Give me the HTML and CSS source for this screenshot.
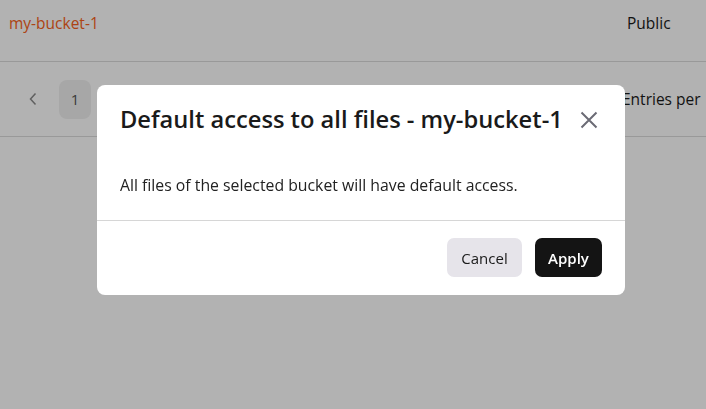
FILE: index.html
```html
<!DOCTYPE html>
<html>
<head>
<meta charset="utf-8">
<link rel="stylesheet" href="styles.css">
</head>
<body>
<div class="page">
  <div class="row">
    <span class="bucket">my-bucket-1</span>
    <span class="access">Public</span>
  </div>
  <div class="pager">
    <span class="prev"><svg width="10" height="14" viewBox="0 0 10 14"><path d="M7.5 1.5 L2.5 7 L7.5 12.5" fill="none" stroke="currentColor" stroke-width="1.5"/></svg></span>
    <span class="pagebtn">1</span>
    <span class="spacer"></span>
    <span class="entries">Entries per</span>
  </div>
</div>
<div class="overlay"></div>
<div class="modal">
  <div class="modal-head">
    <h2 class="title">Default access to all files - my-bucket-1</h2>
    <span class="close"><svg width="18" height="18" viewBox="0 0 18 18"><path d="M1.5 1.5 L16.5 16.5 M16.5 1.5 L1.5 16.5" stroke="currentColor" stroke-width="2" fill="none"/></svg></span>
  </div>
  <p class="modal-body">All files of the selected bucket will have default access.</p>
  <div class="modal-foot">
    <button class="btn btn-secondary">Cancel</button>
    <button class="btn btn-primary">Apply</button>
  </div>
</div>
</body>
</html>
```
FILE: styles.css
```css
html, body {
  margin: 0;
  padding: 0;
  width: 706px;
  height: 409px;
  overflow: hidden;
  background: #fff;
  font-family: "Open Sans", "Noto Sans", sans-serif;
  color: #1a1a1a;
}
.page {
  width: 706px;
}
.row {
  display: flex;
  align-items: flex-start;
  height: 62px;
  box-sizing: border-box;
  padding: 12px 0 0 9px;
  border-bottom: 1px solid #dcdcdc;
  font-size: 15.5px;
  line-height: 22px;
}
.bucket {
  color: #f86220;
  flex: 1;
}
.access {
  width: 79px;
  color: #1a1a1a;
}
.pager {
  display: flex;
  align-items: center;
  height: 74px;
  border-bottom: 1px solid #dcdcdc;
  padding-left: 28px;
  font-size: 15.5px;
  white-space: nowrap;
}
.prev {
  display: flex;
  color: #8a8a8a;
  width: 31px;
}
.pagebtn {
  width: 32px;
  height: 39px;
  border-radius: 8px;
  background: #f0f0f0;
  display: flex;
  align-items: center;
  justify-content: center;
  color: #555;
  font-size: 15px;
}
.spacer {
  flex: 1;
}
.entries {
  width: 84px;
}
.overlay {
  position: fixed;
  inset: 0;
  background: rgba(0, 0, 0, 0.3);
}
.modal {
  position: absolute;
  left: 97px;
  top: 85px;
  width: 528px;
  background: #fff;
  border-radius: 8px;
  display: flex;
  flex-direction: column;
}
.modal-head {
  display: flex;
  align-items: center;
  justify-content: space-between;
  padding: 18px 27px 0 23px;
  height: 33px;
}
.title {
  margin: 0;
  font-size: 23.7px;
  line-height: 33px;
  font-weight: 600;
  color: #1a1a1a;
}
.close {
  display: flex;
  color: #6b6b75;
}
.modal-body {
  margin: 0;
  padding: 38px 23px 24px;
  font-size: 15.8px;
  line-height: 22px;
  color: #222;
  border-bottom: 1px solid #d6d6d6;
}
.modal-foot {
  display: flex;
  justify-content: flex-end;
  gap: 13px;
  padding: 17px 23px 18px 0;
}
.btn {
  font-family: "Open Sans", "Noto Sans", sans-serif;
  font-size: 15px;
  height: 39px;
  border: none;
  border-radius: 7px;
  padding: 0;
  cursor: pointer;
}
.btn-secondary {
  background: #e6e4ea;
  color: #1a1a1a;
  width: 75px;
}
.btn-primary {
  background: #141414;
  color: #fff;
  font-weight: 600;
  width: 67px;
}
```
